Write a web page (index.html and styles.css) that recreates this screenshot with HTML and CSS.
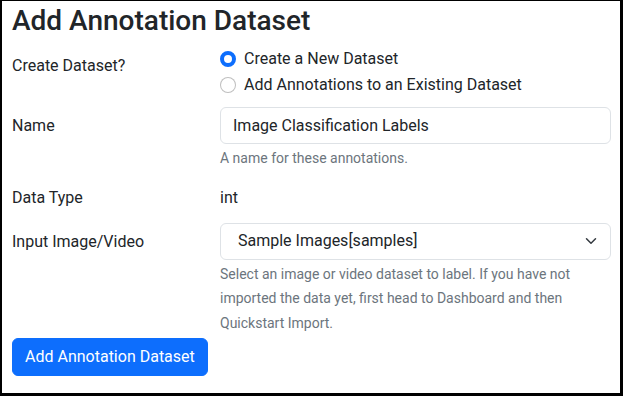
FILE: index.html
```html
<!DOCTYPE html>
<html lang="en">
<head>
    <meta charset="UTF-8">
    <meta name="viewport" content="width=device-width, initial-scale=1.0">
    <title>Add Annotation Dataset</title>
    <link rel="stylesheet" href="styles.css">
</head>
<body>
    <div class="page">
        <h3 class="title">Add Annotation Dataset</h3>

        <div class="form-row radios-row">
            <label class="col-label">Create Dataset?</label>
            <div>
                <label class="form-check">
                    <span class="radio checked"></span>
                    Create a New Dataset
                </label>
                <label class="form-check">
                    <span class="radio"></span>
                    Add Annotations to an Existing Dataset
                </label>
            </div>
        </div>

        <div class="form-row name-row">
            <label class="col-label">Name</label>
            <div>
                <div class="form-control">Image Classification Labels</div>
                <div class="form-text">A name for these annotations.</div>
            </div>
        </div>

        <div class="form-row type-row">
            <div>Data Type</div>
            <div>int</div>
        </div>

        <div class="form-row input-row">
            <label class="col-label">Input Image/Video</label>
            <div>
                <div class="form-select">
                    <span>Sample Images[samples]</span>
                    <svg width="16" height="16" viewBox="0 0 16 16">
                        <path d="M2 5l6 6 6-6" fill="none" stroke="#343a40" stroke-width="2" stroke-linecap="round" stroke-linejoin="round"/>
                    </svg>
                </div>
                <div class="form-text long">Select an image or video dataset to label. If you have not imported the data yet, first head to Dashboard and then Quickstart Import.</div>
            </div>
        </div>

        <button class="btn-primary">Add Annotation Dataset</button>
    </div>
</body>
</html>
```

FILE: styles.css
```css
html, body {
    margin: 0;
    height: 100%;
}
body {
    box-sizing: border-box;
    border: solid #000;
    border-width: 1px 3px 3px 2px;
    background-color: #fff;
    font-family: Roboto, "Liberation Sans", sans-serif;
    font-size: 16px;
    line-height: 24px;
    color: #212529;
    overflow: hidden;
}
.page {
    padding: 3px 9px 0 10px;
}
.title {
    margin: 0 0 9px 0;
    font-size: 28px;
    font-weight: 500;
    line-height: 1.2;
}
.form-row {
    display: grid;
    grid-template-columns: 208px 1fr;
}
.col-label {
    padding-top: 7px;
}
.radios-row {
    margin-bottom: 8px;
}
.form-check {
    display: flex;
    align-items: center;
    gap: 8px;
    height: 24px;
    margin-bottom: 2px;
}
.radio {
    box-sizing: border-box;
    width: 16px;
    height: 16px;
    border-radius: 50%;
    border: 1px solid rgba(0,0,0,0.25);
    background-color: #fff;
}
.radio.checked {
    border: 4px solid #0d6efd;
    background-color: #fff;
}
.form-control, .form-select {
    box-sizing: border-box;
    height: 37px;
    padding: 6px 12px;
    border: 1px solid #dee2e6;
    border-radius: 6px;
    background-color: #fff;
}
.form-select {
    display: flex;
    align-items: center;
    justify-content: space-between;
    padding-left: 17px;
    padding-right: 13px;
}
.form-select svg {
    width: 12px;
    height: 12px;
}
.form-text {
    margin-top: 4px;
    font-size: 14px;
    line-height: 21px;
    color: #6c757d;
}
.form-text.long {
    margin-top: 2px;
    line-height: 24.5px;
}
.name-row {
    margin-bottom: 17px;
}
.type-row {
    margin-bottom: 13px;
}
.input-row {
    margin-bottom: 3px;
}
.btn-primary {
    padding: 6px 12px;
    height: 38px;
    border: 1px solid #0d6efd;
    border-radius: 6px;
    background-color: #0d6efd;
    color: #fff;
    font-family: inherit;
    font-size: 16px;
    line-height: 24px;
    cursor: pointer;
}
```
